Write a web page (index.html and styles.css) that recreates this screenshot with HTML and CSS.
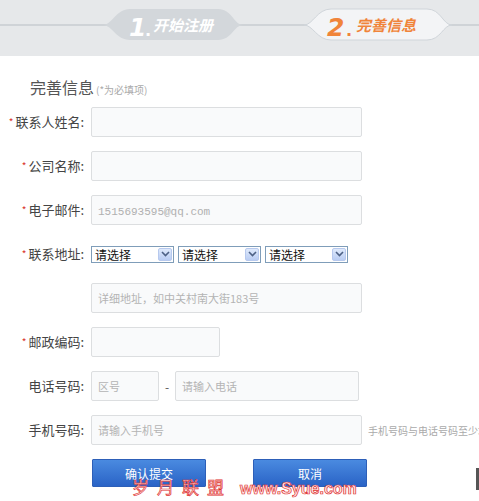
FILE: index.html
```html
<!DOCTYPE html>
<html lang="zh-CN">
<head>
<meta charset="UTF-8">
<title>完善信息</title>
<link rel="stylesheet" href="styles.css">
</head>
<body>

<div class="steps">
  <svg width="479" height="56" viewBox="0 0 479 56">
    <rect x="0" y="0" width="479" height="56" fill="#e6e8ea"/>
    <rect x="0" y="24" width="479" height="2" fill="#cfd3d7"/>
    <path d="M103 25 C112 25 116 9 130 9 L218 9 C232 9 234 25 243 25 C234 25 232 40 218 40 L130 40 C116 40 112 25 103 25 Z" fill="#d3d7db"/>
    <path d="M304 25 C313 25 317 9 331 9 L427 9 C441 9 443 25 452 25 C443 25 441 40 427 40 L331 40 C317 40 313 25 304 25 Z" fill="#f3f4f6" stroke="#d0d5da" stroke-width="1"/>
    <text x="129" y="36" class="step-num" fill="#ffffff">1</text>
    <text x="145" y="36" class="step-dot" fill="#ffffff">.</text>
    <text x="153" y="31" class="step-txt" fill="#ffffff">开始注册</text>
    <text x="327" y="36" class="step-num" fill="#f0843a">2</text>
    <text x="346" y="36" class="step-dot" fill="#f0843a">.</text>
    <text x="356" y="31" class="step-txt" fill="#f0843a">完善信息</text>
  </svg>
</div>

<div class="form">
  <h3 class="title">完善信息<span class="note">(*为必填项)</span></h3>

  <div class="row">
    <label class="lbl"><i>*</i>联系人姓名:</label>
    <input class="ipt" type="text">
  </div>
  <div class="row">
    <label class="lbl"><i>*</i>公司名称:</label>
    <input class="ipt" type="text">
  </div>
  <div class="row">
    <label class="lbl"><i>*</i>电子邮件:</label>
    <input class="ipt mono" type="text" placeholder="1515693595@qq.com">
  </div>
  <div class="row">
    <label class="lbl"><i>*</i>联系地址:</label>
    <div class="sel"><span>请选择</span><b class="arrow"><svg width="9" height="6" viewBox="0 0 9 6"><path d="M1 1 L4.5 4.5 L8 1" fill="none" stroke="#4d6185" stroke-width="1.6"/></svg></b></div>
    <div class="sel"><span>请选择</span><b class="arrow"><svg width="9" height="6" viewBox="0 0 9 6"><path d="M1 1 L4.5 4.5 L8 1" fill="none" stroke="#4d6185" stroke-width="1.6"/></svg></b></div>
    <div class="sel"><span>请选择</span><b class="arrow"><svg width="9" height="6" viewBox="0 0 9 6"><path d="M1 1 L4.5 4.5 L8 1" fill="none" stroke="#4d6185" stroke-width="1.6"/></svg></b></div>
  </div>
  <div class="row">
    <label class="lbl"></label>
    <input class="ipt" type="text" placeholder="详细地址，如中关村南大街183号">
  </div>
  <div class="row">
    <label class="lbl"><i>*</i>邮政编码:</label>
    <input class="ipt short" type="text">
  </div>
  <div class="row">
    <label class="lbl">电话号码:</label>
    <input class="ipt area" type="text" placeholder="区号">
    <span class="dash">-</span>
    <input class="ipt tel" type="text" placeholder="请输入电话">
  </div>
  <div class="row">
    <label class="lbl">手机号码:</label>
    <input class="ipt" type="text" placeholder="请输入手机号">
    <span class="hint">手机号码与电话号码至少填写一项</span>
  </div>

  <div class="btns">
    <button class="btn" type="button">确认提交</button>
    <button class="btn" type="button">取消</button>
  </div>
</div>

<div class="mark">
  <span class="mark-cn">岁</span><span class="mark-cn">月</span><span class="mark-cn">联</span><span class="mark-cn">盟</span>
  <span class="mark-en">www.Syue.com</span>
</div>
<div class="edge"></div>

</body>
</html>
```

FILE: styles.css
```css
html, body {
  margin: 0;
  padding: 0;
  overflow: hidden;
}

body {
  width: 479px;
  height: 501px;
  position: relative;
  background: #fff;
  font-family: "Noto Sans CJK SC", "Noto Sans", sans-serif;
  color: #333;
}

.steps svg {
  display: block;
}

.step-num {
  font-family: "DejaVu Sans", sans-serif;
  font-weight: bold;
  font-style: italic;
  font-size: 25px;
}

.step-dot {
  font-family: "DejaVu Sans", sans-serif;
  font-weight: bold;
  font-size: 16px;
}

.step-txt {
  font-family: "Noto Sans CJK SC", sans-serif;
  font-style: italic;
  font-weight: bold;
  font-size: 15px;
}

.form {
  padding-top: 20px;
}

.title {
  margin: 0 0 6px 30px;
  font-size: 16px;
  font-weight: normal;
  color: #555;
  line-height: 22px;
}

.note {
  font-size: 10px;
  color: #aaa;
  margin-left: 2px;
}

.row {
  display: flex;
  align-items: center;
  height: 30px;
  margin-bottom: 14px;
  white-space: nowrap;
}

.lbl {
  width: 84px;
  margin-right: 7px;
  flex: none;
  text-align: right;
  font-size: 13px;
  line-height: 16px;
  color: #444;
}

.lbl i {
  font-style: normal;
  color: #d9322b;
  font-size: 10px;
  margin-right: 2px;
  vertical-align: 1px;
}

.ipt {
  box-sizing: border-box;
  width: 271px;
  height: 30px;
  flex: none;
  border: 1px solid #dcdee0;
  border-radius: 2px;
  background: #f9fafb;
  padding: 0 6px;
  font-family: "Noto Sans CJK SC", sans-serif;
  font-size: 11px;
  color: #333;
  outline: none;
}

.ipt::placeholder {
  color: #b4b4b4;
}

.ipt.mono::placeholder {
  font-family: "Liberation Mono", monospace;
  font-size: 11px;
  color: #b0b0b0;
}

.ipt.short {
  width: 129px;
}

.ipt.area {
  width: 68px;
}

.ipt.tel {
  width: 184px;
}

.dash {
  width: 16px;
  text-align: center;
  font-size: 12px;
  color: #555;
}

.hint {
  margin-left: 6px;
  font-size: 10px;
  color: #aaa;
}

.sel {
  box-sizing: border-box;
  display: flex;
  align-items: center;
  justify-content: space-between;
  width: 83px;
  height: 17px;
  margin-right: 4px;
  border: 1px solid #7f9db9;
  background: #fff;
  font-size: 12px;
  line-height: 15px;
  color: #111;
  padding-left: 3px;
}

.arrow {
  display: flex;
  align-items: center;
  justify-content: center;
  width: 14px;
  height: 13px;
  margin-right: 1px;
  border-radius: 2px;
  background: linear-gradient(#dfe9fb, #b9cdf3);
  border: 1px solid #b7c9ee;
  box-sizing: border-box;
}

.btns {
  display: flex;
  gap: 47px;
  padding-left: 92px;
  margin-top: 3px;
}

.btn {
  width: 114px;
  height: 28px;
  border: 1px solid #2d5fb8;
  border-radius: 1px;
  background: linear-gradient(#4a8ae0, #2a63c6);
  color: #fff;
  font-family: "Noto Sans CJK SC", sans-serif;
  font-size: 12px;
  padding: 0;
}

.mark {
  position: absolute;
  left: 132px;
  top: 474px;
  display: flex;
  align-items: baseline;
  gap: 8px;
  white-space: nowrap;
  color: #fde9e9;
  -webkit-text-stroke: 0.7px #e0302e;
}

.mark-cn {
  font-family: "Noto Sans CJK SC", sans-serif;
  font-size: 17px;
  line-height: 26px;
}

.mark-en {
  font-family: "Liberation Sans", sans-serif;
  font-weight: bold;
  font-size: 16px;
  margin-left: 8px;
}

.edge {
  position: absolute;
  right: 0;
  top: 468px;
  width: 3px;
  height: 22px;
  background: #555;
}
```
